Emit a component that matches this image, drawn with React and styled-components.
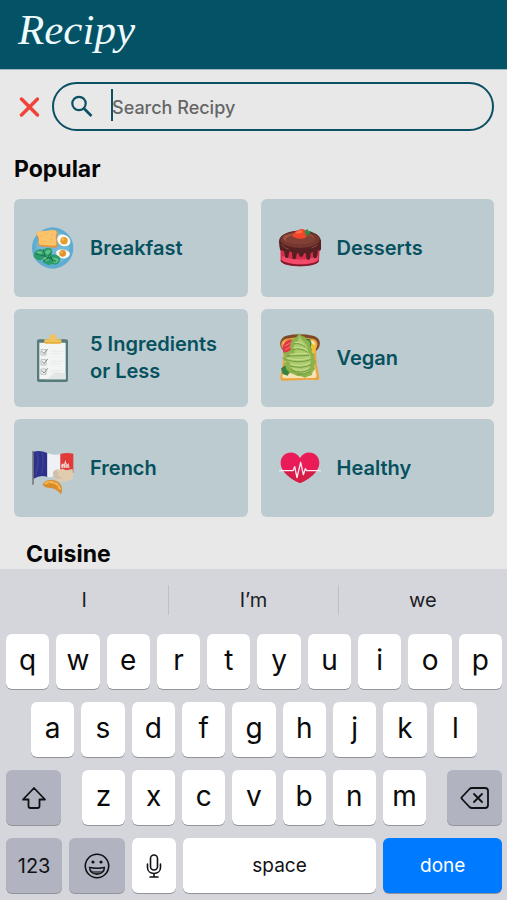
import React from 'react'
import styled, { createGlobalStyle } from 'styled-components'

const GlobalStyle = createGlobalStyle`
  * {
    box-sizing: border-box;
  }

  body {
    margin: 0;
    background: #e8e8e8;
    font-family: Inter, 'Liberation Sans', sans-serif;
  }

  button,
  input {
    font: inherit;
  }
`

const Screen = styled.div`
  display: flex;
  flex-direction: column;
  width: 100%;
  height: 100vh;
  background: #e8e8e8;
`

const Header = styled.header`
  display: flex;
  align-items: flex-start;
  flex-shrink: 0;
  height: 70px;
  padding: 0 18px;
  background: #035265;
  border-bottom: 1px solid #9dbac1;
`

const Logo = styled.h1`
  margin: 0;
  color: #eefafc;
  font-family: 'Snell Roundhand', 'Liberation Serif', serif;
  font-size: 43px;
  font-style: italic;
  font-weight: 400;
  line-height: 60px;
`

const Content = styled.main`
  flex: 1;
  min-height: 0;
  overflow: hidden;
  padding: 12px 13px 0 14px;
`

const SearchRow = styled.form`
  display: flex;
  align-items: center;
  gap: 8px;
`

const CloseButton = styled.button`
  display: flex;
  justify-content: center;
  align-items: center;
  width: 30px;
  height: 30px;
  padding: 0;
  border: 0;
  background: none;
`

const SearchBox = styled.label`
  display: flex;
  align-items: center;
  flex: 1;
  height: 49px;
  padding: 0 16px;
  border: 2px solid #0b5163;
  border-radius: 25px;
`

const Caret = styled.span`
  width: 2px;
  height: 32px;
  margin: 0 -1px 4px 17px;
  background: #0b5163;
`

const SearchInput = styled.input`
  flex: 1;
  min-width: 0;
  padding: 2px 0 0;
  border: 0;
  outline: none;
  background: none;
  color: #222;
  font-size: 18px;
  font-weight: 500;

  &::placeholder {
    color: #666;
    opacity: 1;
  }
`

const SectionTitle = styled.h2`
  margin: ${({ $inset }) => ($inset ? '22px 0 0 12px' : '23px 0 15px')};
  color: #050505;
  font-size: 23px;
  font-weight: 700;
  line-height: 30px;
`

const CardGrid = styled.div`
  display: grid;
  grid-template-columns: 1fr 1fr;
  gap: 12px 13px;
`

const Card = styled.button`
  display: flex;
  align-items: center;
  gap: 16px;
  height: 98px;
  padding: 0 18px;
  border: 0;
  border-radius: 6px;
  background: #bccbcf;
  color: #07515f;
  font-size: 20px;
  font-weight: 600;
  line-height: 27px;
  text-align: left;
`

const CardIcon = styled.svg`
  flex-shrink: 0;
  width: 42px;
  height: 54px;
`

const Keyboard = styled.section`
  flex-shrink: 0;
  padding: 0 5px 7px 6px;
  background: #d5d6dc;
`

const Suggestions = styled.div`
  display: flex;
  align-items: center;
  height: 62px;
  margin: 0 -5px 3px -6px;
`

const Suggestion = styled.button`
  flex: 1;
  height: 30px;
  padding: 0;
  border: 0;
  background: none;
  color: #1c1c1e;
  font-size: 20px;

  & + & {
    border-left: 1px solid #bfc0c7;
  }
`

const KeyRows = styled.div`
  display: flex;
  flex-direction: column;
  gap: 13px;
`

const KeyRow = styled.div`
  display: flex;
  gap: 7px;
  padding: 0 ${({ $inset }) => ($inset ? '25px' : '0')};
`

const LetterGroup = styled.div`
  display: flex;
  flex: 1;
  gap: 7px;
  margin: 0 14px;
`

const Key = styled.button`
  display: flex;
  justify-content: center;
  align-items: center;
  flex: ${({ $grow }) => $grow || 1} 1 0;
  min-width: 0;
  height: 55px;
  padding: 0 0 4px;
  border: 0;
  border-radius: 6px;
  background: #fff;
  box-shadow: 0 1px 0 #92949b;
  color: #0a0a0a;
  font-size: 28px;
  font-weight: 400;
`

const ActionKey = styled(Key)`
  padding: 0;
  background: ${({ $tone }) =>
    $tone === 'blue' ? '#007aff' : $tone === 'white' ? '#fff' : '#b1b4c0'};
  color: ${({ $tone }) => ($tone === 'blue' ? '#fff' : '#101114')};
  font-size: ${({ $digits }) => ($digits ? '20px' : '19px')};
  font-weight: 400;
`

const SideKey = styled(ActionKey)`
  flex: 0 0 55px;
`

const Breakfast = () => (
  <CardIcon viewBox="0 -18 126 162" aria-hidden="true">
    <circle cx="62" cy="63" r="62" fill="#5eacd2" />
    <circle cx="62" cy="63" r="50" fill="#70b7d8" />
    <path d="M17 15q10-4 19-3l27-3q14-1 14 9l-3 11 3 27q-1 7-10 6l-45-4q-5-4-3-15l-2-12q-7-8 0-16z" fill="#e4953c" />
    <path d="M18 14q9-3 19-2l25-3q12 0 12 8l-3 11 2 24q-1 5-9 4l-41-3q-4-3-2-13l-2-12q-8-6-1-14z" fill="#fbc46b" />
    <path d="M28 26l3 2m12-8l3 2m9 13l3 2m-22 5l3 2m21-22l3 2" stroke="#e99f48" strokeWidth="3" />
    <path d="M79 27c9-10 32-2 36 13 2 16-10 18-19 18-13-1-27-18-17-31z" fill="#faf9ef" />
    <circle cx="96" cy="41" r="11" fill="#e79b2b" />
    <circle cx="93" cy="37" r="4" fill="#f5bd58" />
    <path d="M74 72c11-8 34-5 40 7-1 12-13 17-23 15-11-1-23-12-17-22z" fill="#faf9ef" />
    <circle cx="92" cy="79" r="10" fill="#e28f25" />
    <circle cx="89" cy="76" r="4" fill="#f2b44e" />
    <path d="M8 76q12-15 25-8 15-11 26-2 4 10-2 16 17-1 26 8 5 12-5 20-10 6-17 1-11 7-19-1-11-2-9-13-14 6-21-2-12-3-4-19z" fill="#2d9c6c" />
    <path d="M13 75q12-7 20 2l-9 8q-8-1-11-10zm24 0q14-12 20-3-1 9-13 11zm-5 20q13-13 23-5-2 13-16 13zm29-2q17-4 19 9-6 9-16 4z" fill="#5dbf83" />
    <path d="M11 80l29 8 32 15M34 68l5 19m20-12L45 94m10-7l8 16m-30 0l22-13" stroke="#14754f" strokeWidth="3" fill="none" />
  </CardIcon>
)

const Cake = () => (
  <CardIcon viewBox="0 -18 126 162" aria-hidden="true">
    <path d="M4 48q58 23 119 0l-3 53c-5 22-108 23-115 0z" fill="#d92c4a" />
    <path d="M10 86q50 23 107 0l-1 14c-15 16-90 16-108 0z" fill="#f24a6a" />
    <path d="M5 98c18 18 100 20 115 0v5c-14 21-105 18-115 0z" fill="#781c2b" />
    <path d="M0 43C2 3 119-2 126 41v26q-4 9-9 0l-3 23q-6 8-11 1l-2-17-6 5-2 16q-6 8-11-1l-1-14q-5-5-7 1-3 13-12 7l-4-10-5 2-2 14q-6 6-11 0l-1-18-8-3-3 17q-6 6-10-1l-3-17-11-2Q1 62 0 43z" fill="#552022" />
    <ellipse cx="63" cy="38" rx="59" ry="25" fill="#75372e" />
    <ellipse cx="60" cy="34" rx="47" ry="16" fill="#a15a45" />
    <ellipse cx="64" cy="37" rx="44" ry="15" fill="#814035" />
    <path d="M7 52q12 14 22 14m68-3l19-8" stroke="#8a4940" strokeWidth="3" fill="none" />
    <path d="M40 28q2-11 14-17 14-10 25-1 9 9 3 20-18 12-42-2z" fill="#f44429" />
    <path d="M49 20q12-13 19-9 5 4-1 7z" fill="#ff764e" />
    <path d="M77 11l9-5 2 7 9 1-7 6 4 4-9-1-5 4z" fill="#2d884b" />
  </CardIcon>
)

const Clipboard = () => (
  <CardIcon viewBox="0 -18 126 162" aria-hidden="true">
    <rect x="15" y="7" width="93" height="128" rx="6" fill="#567b7a" />
    <path d="M22 17h79v110H22z" fill="#f3f4f4" />
    <path d="M70 107h31v20H43z" fill="#e2e6e7" />
    <path d="M37 7h14q1-16 11-16t12 16h14v10q-1 4-5 4H42q-5 0-5-5z" fill="#f1c35c" />
    <path d="M39 17h47" stroke="#dfac45" strokeWidth="3" />
    <path d="M27 38h15v16H27zm0 30h15v16H27zm0 28h15v16H27z" fill="none" stroke="#a2a6a7" strokeWidth="2" />
    <path d="M30 43l6 7 11-14M30 73l6 7 11-14M30 101l6 7 11-14" fill="none" stroke="#84898a" strokeWidth="3" />
    <path d="M57 43h37M57 50h30M57 73h37M57 80h31M57 101h36M57 108h27" stroke="#e2e4e5" strokeWidth="2" />
  </CardIcon>
)

const AvocadoToast = () => (
  <CardIcon viewBox="0 -18 126 162" aria-hidden="true">
    <path d="M22-4q40-8 80 0c22 5 25 26 15 40l-9 10-92-2C-2 30-1 3 22-4z" fill="#7f4a2c" />
    <path d="M20 6q40-10 84 0c14 5 14 19 7 30l2 44 8 43q0 7-7 7l-27-2-32 2-42 1q-10-1-9-9l7-42 4-41C1 25 6 11 20 6z" fill="#eca43c" />
    <path d="M22 11q38-8 80 0c10 6 9 17 2 25l2 44 7 37q0 5-7 6l-92 1q-5 0-4-6l7-38 4-41C8 26 11 16 22 11z" fill="#f6e2b2" />
    <path d="M12 25q7-20 32-18l4 32-17 8-14 5q-8-8-5-27z" fill="#df3a44" />
    <path d="M17 27l23-12m-21 23l21-12m-16 23l16-12" stroke="#f5776f" strokeWidth="3" />
    <path d="M72 3l21 4 6 15-6 14-14-6zM6 95l11-10 15 6 9 18-10-2-5 9-15-5zM93 42l12 7-2 14-10-4z" fill="#36833f" />
    <path d="M97 18l13 8-4 26-10-5z" fill="#f2c12e" />
    <path d="M62-12l6 9 9 2 6 9 10 6v13l7 9-2 10 8 8v11l5 9-5 12 2 10-7 8-3 11-11 3-9 4-11-4-12-1-12-6-11-4-9-9-3-9-6-9 7-5-12-11 10-8-7-9 13-2 11-6-3-12 4-11 1-9 10-4 6-5z" fill="#8cb24b" />
    <path d="M61-3l9 13 13 13 4 18 9 20-1 22-5 19-12 9-28-7-22-18 9-5-17-15 14-10 14-9-4-15 2-14 10-5z" fill="#abcb6d" />
    <path d="M43 21q19-5 36 9M40 38q26-7 47 9M24 57q36 0 66-2M19 67q38 14 76 1M30 86q35 11 68-3M38 100q30 12 54-3M56 112q20 2 36-8" fill="none" stroke="#729a3f" strokeWidth="3" />
    <path d="M47 16q18-2 28 7M43 33q23-7 41 7M32 52q32-4 55-3M22 63q38 10 68 0M32 81q33 10 60-2M42 95q28 10 47-2" fill="none" stroke="#c8de91" strokeWidth="3" />
  </CardIcon>
)

const FrenchFlag = () => (
  <CardIcon viewBox="0 -18 126 162" aria-hidden="true">
    <path d="M0 12h6v101H0z" fill="#85878b" />
    <path d="M5 14q20-5 41 4v72Q26 82 5 95z" fill="#2d3288" />
    <path d="M15 17q7 32-4 68M31 15q6 38-3 67" fill="none" stroke="#3b3f98" strokeWidth="5" />
    <path d="M46 18q20 8 39 3v57q-21 15-39 12z" fill="#f0f1f5" />
    <path d="M85 21q20-5 39-1v58q-21-6-39 1z" fill="#e13a38" />
    <path d="M66 72q8-10 17-3l8-4 12 5 19-4 2 28-15 8-25 3-21-12z" fill="#e2ccb0" />
    <path d="M63 75q9-10 16 1v11l13 6q-15 7-28-2z" fill="#cfc0ad" />
    <path d="M88 62v-9l5-4 3 5 4-15 5 15 4-6 4 14z" fill="#f7dcd4" />
    <path d="M94 62v-6m7 6V50m7 12v-6" stroke="#d3655f" strokeWidth="2" />
    <path d="M32 111q10-13 25-12 20 0 29 14 7 11 1 29-14-17-28-18-10-1-18-3-7-3-9-10z" fill="#d88b28" />
    <path d="M38 110q14-9 26-3 16 3 20 21" fill="none" stroke="#f4b64e" strokeWidth="7" />
    <path d="M51 103l-2 15m18-13l-5 16m18-9l-8 14" stroke="#d99435" strokeWidth="2" />
  </CardIcon>
)

const HeartBeat = () => (
  <CardIcon viewBox="0 -18 126 162" aria-hidden="true">
    <path d="M63 108C45 101 5 78 5 48 5 15 46 5 63 33c17-28 58-18 58 15 0 30-40 53-58 60z" fill="#ea1c58" />
    <path d="M13 71c12 17 33 30 50 37 17-7 38-20 50-37z" fill="#d51d48" />
    <path d="M0 71h42l5-12 7 33L65 46l8 37 6-18 4 6h43" fill="none" stroke="#f7e9ef" strokeWidth="4" strokeLinejoin="round" />
  </CardIcon>
)

const SearchIcon = () => (
  <svg width="24" height="24" viewBox="0 0 24 24" fill="none" stroke="#0b5163" aria-hidden="true">
    <circle cx="9" cy="8.5" r="6.700" strokeWidth="2.200" />
    <path d="M14 13.500l7.500 7.500" strokeWidth="2.600" />
  </svg>
)

const CloseIcon = () => (
  <svg width="20" height="20" viewBox="0 0 20 20" aria-hidden="true">
    <path d="M2.500 2l16 16M18.500 2l-16 16" stroke="#f0433a" strokeWidth="3.5" strokeLinecap="round" />
  </svg>
)

const ShiftIcon = () => (
  <svg width="26" height="24" viewBox="0 0 26 24" fill="none" aria-hidden="true">
    <path d="M13 2L2 13.500h5.500V20q0 2 2 2h7q2 0 2-2v-6.500H24z" stroke="currentColor" strokeWidth="1.8" strokeLinejoin="round" />
  </svg>
)

const BackspaceIcon = () => (
  <svg width="30" height="24" viewBox="0 0 30 24" fill="none" stroke="currentColor" aria-hidden="true">
    <path d="M12 2h13q3 0 3 3v14q0 3-3 3H12q-1.500 0-2.500-1L2 13q-1-1 0-2l7.500-8Q10.500 2 12 2z" strokeWidth="1.8" strokeLinejoin="round" />
    <path d="M14 8l8 8m0-8l-8 8" strokeWidth="1.8" strokeLinecap="round" />
  </svg>
)

const SmileyIcon = () => (
  <svg width="26" height="26" viewBox="0 0 26 26" fill="none" aria-hidden="true">
    <circle cx="13" cy="13" r="11.700" stroke="currentColor" strokeWidth="1.600" />
    <circle cx="9" cy="9" r="1.600" fill="currentColor" />
    <circle cx="17" cy="9" r="1.600" fill="currentColor" />
    <path d="M5.500 14.500q7.500 1.500 15 0c0 9-15 9-15 0z" fill="#55575f" stroke="currentColor" strokeWidth="1.300" />
    <path d="M6.500 15.500q6.500 1 13 0l-1 2q-5.500 1-11 0z" fill="#b1b4c0" />
  </svg>
)

const MicIcon = () => (
  <svg width="16" height="26" viewBox="0 0 16 26" fill="none" stroke="currentColor" strokeWidth="1.600" strokeLinecap="round" aria-hidden="true">
    <rect x="4.500" y="2" width="7" height="15" rx="3.500" />
    <path d="M1.500 11v3.500c0 8 13 8 13 0V11M8 20.500V24M4 24h8" />
  </svg>
)

const categories = [
  { label: 'Breakfast', Icon: Breakfast },
  { label: 'Desserts', Icon: Cake },
  { label: '5 Ingredients or Less', Icon: Clipboard },
  { label: 'Vegan', Icon: AvocadoToast },
  { label: 'French', Icon: FrenchFlag },
  { label: 'Healthy', Icon: HeartBeat },
]

const renderLetters = letters =>
  letters.split('').map(letter => <Key key={letter}>{letter}</Key>)

const App = () => {
  return (
    <Screen>
      <GlobalStyle />
      <Header>
        <Logo>Recipy</Logo>
      </Header>
      <Content>
        <SearchRow onSubmit={e => e.preventDefault()}>
          <CloseButton type="button" aria-label="Close search">
            <CloseIcon />
          </CloseButton>
          <SearchBox>
            <SearchIcon />
            <Caret />
            <SearchInput type="text" placeholder="Search Recipy" aria-label="Search Recipy" />
          </SearchBox>
        </SearchRow>
        <SectionTitle>Popular</SectionTitle>
        <CardGrid>
          {categories.map(({ label, Icon }) => (
            <Card key={label}>
              <Icon />
              <span>{label}</span>
            </Card>
          ))}
        </CardGrid>
        <SectionTitle $inset>Cuisine</SectionTitle>
      </Content>
      <Keyboard aria-label="Keyboard">
        <Suggestions>
          <Suggestion>I</Suggestion>
          <Suggestion>I’m</Suggestion>
          <Suggestion>we</Suggestion>
        </Suggestions>
        <KeyRows>
          <KeyRow>{renderLetters('qwertyuiop')}</KeyRow>
          <KeyRow $inset>{renderLetters('asdfghjkl')}</KeyRow>
          <KeyRow>
            <SideKey aria-label="Shift">
              <ShiftIcon />
            </SideKey>
            <LetterGroup>{renderLetters('zxcvbnm')}</LetterGroup>
            <SideKey aria-label="Delete">
              <BackspaceIcon />
            </SideKey>
          </KeyRow>
          <KeyRow>
            <ActionKey $grow={56} $digits>123</ActionKey>
            <ActionKey $grow={56} aria-label="Emoji">
              <SmileyIcon />
            </ActionKey>
            <ActionKey $grow={43} $tone="white" aria-label="Dictate">
              <MicIcon />
            </ActionKey>
            <ActionKey $grow={193} $tone="white">space</ActionKey>
            <ActionKey $grow={118} $tone="blue">done</ActionKey>
          </KeyRow>
        </KeyRows>
      </Keyboard>
    </Screen>
  )
}

export default App
